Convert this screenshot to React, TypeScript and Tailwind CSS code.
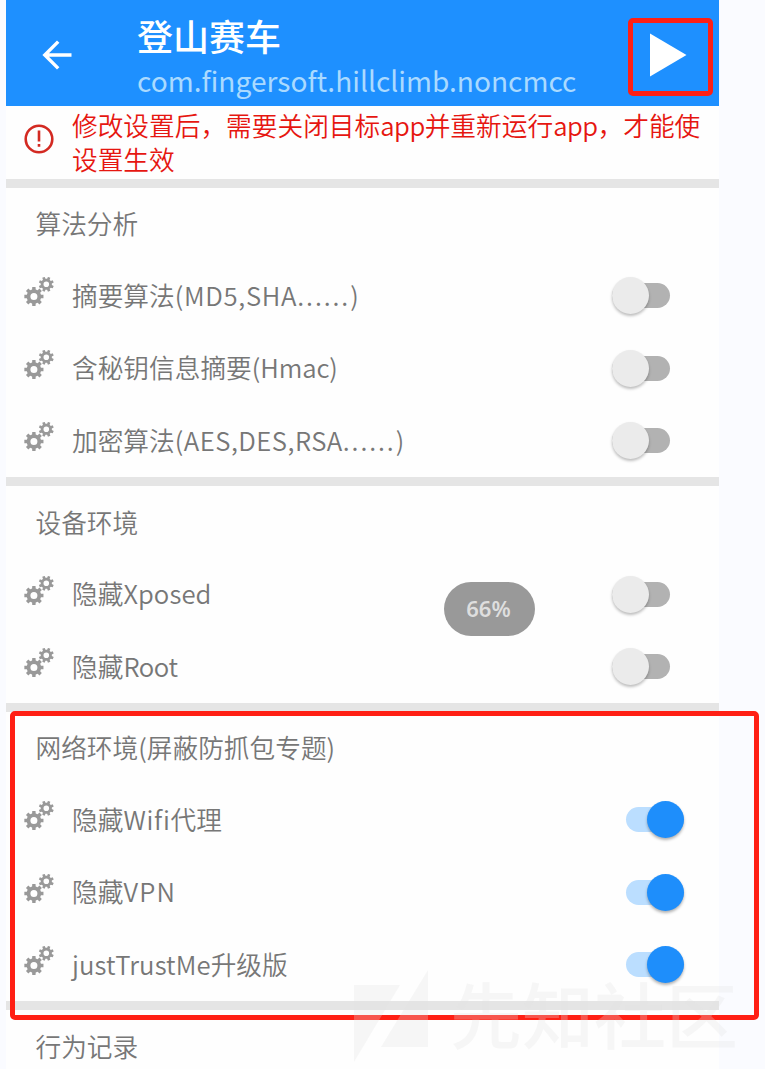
import React from "react";

function gear(cx: number, cy: number, ro: number, rb: number, hole: number, turn: number) {
  const pts: string[] = [];
  for (let i = 0; i < 8; i++) {
    const a = ((i * 45 + turn) * Math.PI) / 180;
    const steps: [number, number][] = [
      [-0.25, rb],
      [-0.17, ro],
      [0.17, ro],
      [0.25, rb],
    ];
    for (const [d, r] of steps) {
      pts.push(`${(cx + r * Math.sin(a + d)).toFixed(2)} ${(cy - r * Math.cos(a + d)).toFixed(2)}`);
    }
  }
  return `M${pts.join("L")}ZM${cx - hole} ${cy}a${hole} ${hole} 0 1 0 ${hole * 2} 0a${hole} ${hole} 0 1 0 ${-hole * 2} 0Z`;
}

const BIG = gear(9.9, 19.5, 9.7, 7.3, 3.5, 0);
const SMALL = gear(22.3, 7.3, 7.6, 5.6, 2.8, 22.5);

function Gears() {
  return (
    <svg className="mb-[7px] h-[30px] w-[30px] shrink-0 text-[#999999]" viewBox="0 0 30 30" fill="currentColor" fillRule="evenodd">
      <path d={BIG} />
      <path d={SMALL} />
    </svg>
  );
}

function Switch({ on }: { on: boolean }) {
  return on ? (
    <div className="mr-[35px] flex h-[25px] w-[58px] items-center justify-end rounded-full bg-[#bbdeff]">
      <div className="h-[37px] w-[37px] shrink-0 rounded-full bg-[#1e8efb] shadow-[0_2px_3px_rgba(0,0,0,0.3)]" />
    </div>
  ) : (
    <div className="mr-[49.500px] flex h-[25px] w-[58px] items-center rounded-full bg-[#b2b2b2]">
      <div className="h-[37px] w-[37px] shrink-0 rounded-full bg-[#ebebeb] shadow-[0_2px_3px_rgba(0,0,0,0.26)]" />
    </div>
  );
}

type Part = [string, string];

function Row({ parts, on = false }: { parts: Part[]; on?: boolean }) {
  return (
    <div className="flex h-[72.500px] shrink-0 items-center pl-[18px]">
      <Gears />
      <div className="mb-[2px] ml-[18px] flex-1 whitespace-nowrap">
        {parts.map(([text, cls]) => (
          <span key={text} className={cls}>
            {text}
          </span>
        ))}
      </div>
      <Switch on={on} />
    </div>
  );
}

function Heading({ text }: { text: string }) {
  return <div className="flex min-h-0 flex-1 items-center pb-[1px] pl-[29.500px]">{text}</div>;
}

const Divider = () => <div className="h-[9px] shrink-0 bg-[#e5e5e5]" />;

export default function App() {
  return (
    <div className="relative h-[1069px] w-[765px] overflow-hidden bg-[#fafbff] pl-[6px] font-['Noto_Sans_CJK_SC',sans-serif] text-[25.7px] leading-[34px] font-[350] text-[#777777]">
      <div className="flex h-full w-[713px] flex-col bg-[#fefefe]">
        <header className="flex h-[106px] shrink-0 items-center bg-[#1e90ff] pl-[36px]">
          <svg className="mt-[4px] h-[30px] w-[31px] shrink-0" viewBox="0 0 31 30" fill="none" stroke="#fff" strokeWidth="3.4">
            <path d="M29.5 15H3M16.2 1.6 2.8 15l13.4 13.4" />
          </svg>
          <div className="mt-[6px] ml-[64px] flex-1 whitespace-nowrap">
            <h1 className="text-[36px] font-medium leading-[44px] text-white">登山赛车</h1>
            <p className="mt-[3px] text-[28.1px] leading-[40px] font-normal text-[#aadaff]">com.fingersoft.hillclimb.noncmcc</p>
          </div>
          <svg className="mt-[4px] mr-[32px] h-[44px] w-[38px] shrink-0" viewBox="0 0 38 44" fill="#fff">
            <path d="M1 .5V43.500L37.500 22Z" />
          </svg>
        </header>
        <div className="flex h-[73px] shrink-0 items-center pl-[18px] text-[#e61610]">
          <svg className="mb-[8px] h-[30px] w-[30px] shrink-0" viewBox="0 0 30 30" fill="none" stroke="#d32a22" strokeWidth="2.6">
            <circle cx="15" cy="15" r="13.300" />
            <path d="M15 6.500V17.500M15 20V22.800" />
          </svg>
          <div className="mb-[2px] ml-[18px] whitespace-nowrap">
            <div>
              修改设置后，需要关闭目标<span className="tracking-[-0.5px]">app</span>并重新运行
              <span className="tracking-[-0.5px]">app</span>，才能使
            </div>
            <div>设置生效</div>
          </div>
        </div>
        <Divider />
        <section className="flex h-[289px] shrink-0 flex-col">
          <Heading text="算法分析" />
          <Row parts={[["摘要算法", ""], ["(MD5,SHA", "tracking-[0.7px]"], ["......)", "tracking-[1.9px]"]]} />
          <Row parts={[["含秘钥信息摘要", ""], ["(Hmac)", "tracking-[-0.1px]"]]} />
          <Row parts={[["加密算法", ""], ["(AES,DES,RSA", "tracking-[0.5px]"], ["......)", "tracking-[1.9px]"]]} />
        </section>
        <Divider />
        <section className="flex h-[217px] shrink-0 flex-col">
          <Heading text="设备环境" />
          <Row parts={[["隐藏", ""], ["Xposed", "tracking-[0.1px]"]]} />
          <Row parts={[["隐藏", ""], ["Root", "tracking-[-0.4px]"]]} />
        </section>
        <Divider />
        <section className="flex h-[289px] shrink-0 flex-col">
          <Heading text="网络环境(屏蔽防抓包专题)" />
          <Row on parts={[["隐藏", ""], ["Wifi", "tracking-[0.7px]"], ["代理", ""]]} />
          <Row on parts={[["隐藏", ""], ["VPN", "tracking-[1.2px]"]]} />
          <Row on parts={[["justTrustMe", "tracking-[0.1px]"], ["升级版", ""]]} />
        </section>
        <Divider />
        <section className="flex h-[72px] shrink-0 flex-col">
          <Heading text="行为记录" />
        </section>
      </div>

      <div className="absolute left-[444px] top-[582px] flex h-[54px] w-[91px] items-center justify-center rounded-full bg-[#999999] pr-[2px] pb-[2px] font-['Noto_Sans',sans-serif] text-[22px] font-semibold text-[#dedede]">
        66%
      </div>
      <div className="absolute left-[627.500px] top-[18px] h-[78px] w-[85px] rounded-[5px] border-[5px] border-[#ff1f14]" />
      <div className="absolute left-[9.500px] top-[711px] h-[308.500px] w-[749px] rounded-[5px] border-[5px] border-[#ff1f14]" />
      <div className="absolute left-[354px] top-[970px] flex items-start text-[#e2e3e3]/28">
        <svg className="h-[92px] w-[74px]" viewBox="0 0 74 92" fill="currentColor">
          <path d="M0 15H46L0 92ZM74 0V77H27Z" />
        </svg>
        <div className="ml-[22px] text-[72px] leading-[84px] font-medium whitespace-nowrap">先知社区</div>
      </div>
    </div>
  );
}
